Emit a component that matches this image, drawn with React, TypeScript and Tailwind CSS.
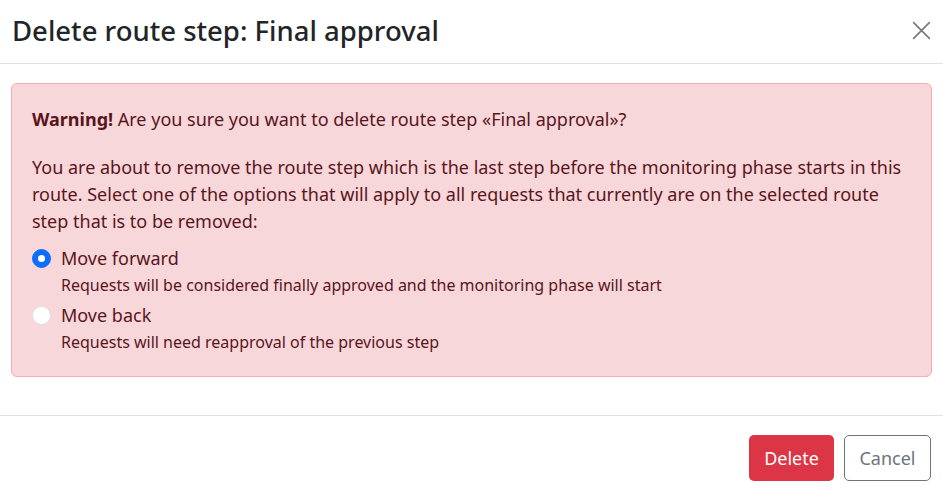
import React, { useState } from 'react';

const font = { fontFamily: '"Segoe UI", "Noto Sans", "Liberation Sans", sans-serif' };

export default function App() {
  const [choice, setChoice] = useState<'forward' | 'back'>('forward');

  const Radio = ({ value, label, hint }: { value: 'forward' | 'back'; label: string; hint: string }) => {
    const checked = choice === value;
    return (
      <label className="flex items-start gap-[10px] cursor-pointer" onClick={() => setChoice(value)}>
        <span
          className={
            checked
              ? 'mt-[4px] w-[19px] h-[19px] shrink-0 rounded-full bg-[#0d6efd] border border-[#0d6efd] flex items-center justify-center'
              : 'mt-[4px] w-[19px] h-[19px] shrink-0 rounded-full bg-white border border-[#dee2e6]'
          }
        >
          {checked && <span className="w-[7px] h-[7px] rounded-full bg-white" />}
        </span>
        <span className="flex flex-col">
          <span className="text-[18px] leading-[27px]">{label}</span>
          <span className="text-[16px] leading-[27px]">{hint}</span>
        </span>
      </label>
    );
  };

  return (
    <div className="w-[943px] h-[495px] bg-white text-[#212529] overflow-hidden" style={font}>
      <div className="h-[64px] flex items-center justify-between pl-[12px] pr-[12px] border-b border-[#dee2e6]">
        <h4 className="text-[27.5px] leading-[32px] font-medium pb-[2px]">Delete route step: Final approval</h4>
        <button className="w-[19px] h-[19px] text-[#7a7a7a] mb-[2px]" aria-label="Close">
          <svg viewBox="0 0 16 16" width="19" height="19" fill="none" stroke="currentColor" strokeWidth="1.4">
            <path d="M1 1L15 15M15 1L1 15" />
          </svg>
        </button>
      </div>

      <div className="px-[11px] pt-[19px] pb-[38px]">
        <div className="bg-[#f8d7da] border border-[#f1aeb5] rounded-[6px] text-[#58151c] px-[20px] pt-[22px] pb-[20px] text-[18px] leading-[27px]">
          <p className="mb-[21px]">
            <strong className="font-bold">Warning!</strong> Are you sure you want to delete route step «Final approval»?
          </p>
          <p className="mb-[10px]">
            You are about to remove the route step which is the last step before the monitoring phase starts in this
            route. Select one of the options that will apply to all requests that currently are on the selected route
            step that is to be removed:
          </p>
          <div className="flex flex-col gap-[3px]">
            <Radio value="forward" label="Move forward" hint="Requests will be considered finally approved and the monitoring phase will start" />
            <Radio value="back" label="Move back" hint="Requests will need reapproval of the previous step" />
          </div>
        </div>
      </div>

      <div className="border-t border-[#dee2e6] flex justify-end gap-[10px] pt-[19px] pr-[12px]">
        <button className="h-[46px] w-[85px] rounded-[5px] bg-[#dc3545] text-white text-[18px]">Delete</button>
        <button className="h-[46px] w-[87px] rounded-[5px] border border-[#6c757d] text-[#6c757d] text-[18px]">Cancel</button>
      </div>
    </div>
  );
}
